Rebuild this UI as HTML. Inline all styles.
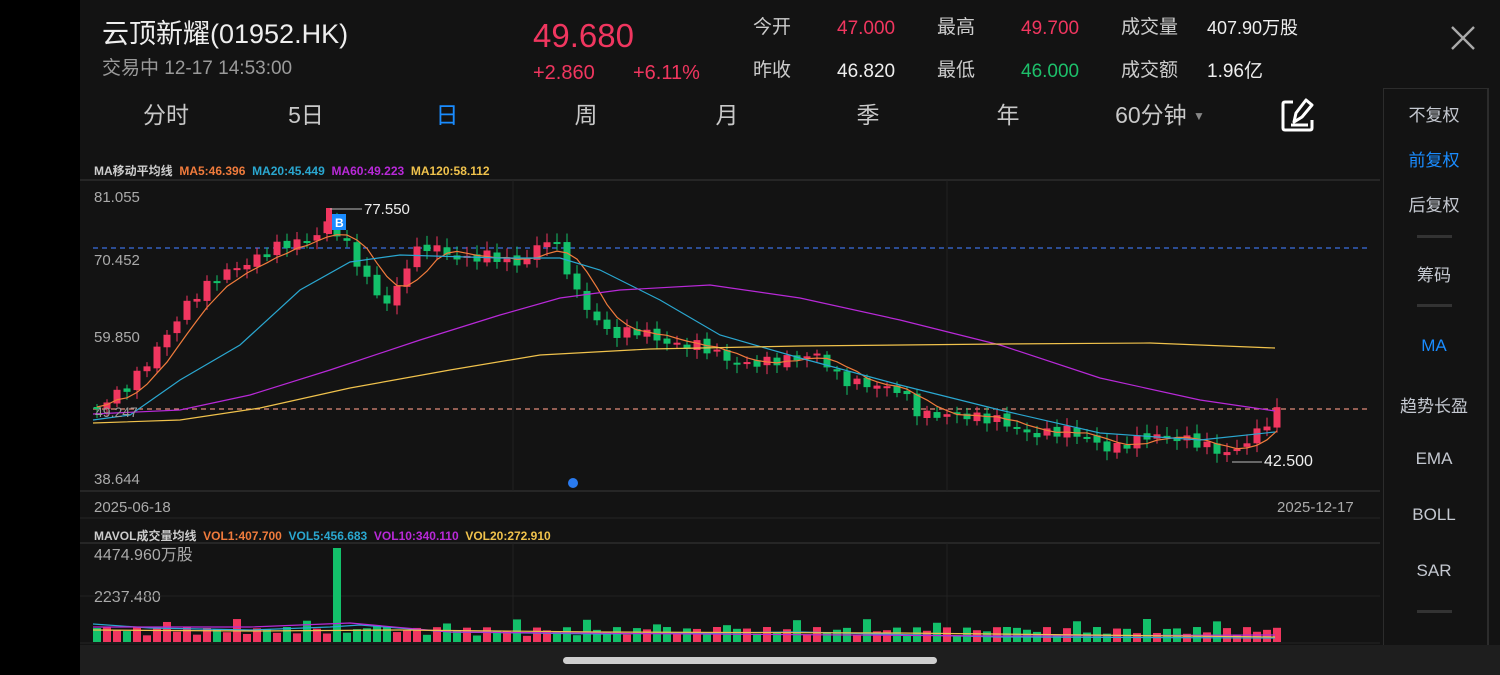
<!DOCTYPE html>
<html><head><meta charset="utf-8"><style>
body{margin:0;width:1500px;height:675px;background:#131313;overflow:hidden;position:relative;font-family:"Liberation Sans","Noto Sans CJK SC",sans-serif;color:#ddd}
.a{position:absolute;white-space:nowrap;line-height:1}
.r{color:#f0365f}.g{color:#1dbf6a}.w{color:#eee}.gr{color:#aaa}
.tab{position:absolute;top:96px;font-size:23px;color:#c8c8c8;transform:translateX(-50%)}
.rp{position:absolute;left:1434px;transform:translateX(-50%);font-size:17px;color:#c4c8d0;white-space:nowrap}
.bar{position:absolute;left:1417px;width:35px;height:3px;background:#333}
</style></head><body>
<div class="a" style="left:0;top:0;width:80px;height:675px;background:#000"></div>
<div class="a w" style="left:102px;top:21px;font-size:27px">云顶新耀(01952.HK)</div>
<div class="a gr" style="left:102px;top:59px;font-size:19px;color:#9a9a9a">交易中 12-17 14:53:00</div>
<div class="a r" style="left:533px;top:19px;font-size:33px">49.680</div>
<div class="a r" style="left:533px;top:63px;font-size:20px">+2.860</div>
<div class="a r" style="left:633px;top:63px;font-size:20px">+6.11%</div>
<div class="a" style="left:753px;top:18px;font-size:19px;color:#ccc">今开</div>
<div class="a r" style="left:837px;top:19px;font-size:19px">47.000</div>
<div class="a" style="left:937px;top:18px;font-size:19px;color:#ccc">最高</div>
<div class="a r" style="left:1021px;top:19px;font-size:19px">49.700</div>
<div class="a" style="left:1121px;top:18px;font-size:19px;color:#ccc">成交量</div>
<div class="a w" style="left:1207px;top:19px;font-size:18px">407.90万股</div>
<div class="a" style="left:753px;top:61px;font-size:19px;color:#ccc">昨收</div>
<div class="a w" style="left:837px;top:62px;font-size:19px">46.820</div>
<div class="a" style="left:937px;top:61px;font-size:19px;color:#ccc">最低</div>
<div class="a g" style="left:1021px;top:62px;font-size:19px">46.000</div>
<div class="a" style="left:1121px;top:61px;font-size:19px;color:#ccc">成交额</div>
<div class="a w" style="left:1207px;top:62px;font-size:19px">1.96亿</div>
<svg class="a" style="left:1450px;top:25px" width="26" height="26"><path d="M2 2L24 24M24 2L2 24" stroke="#aaa" stroke-width="2.4"/></svg>
<div class="tab" style="left:166px">分时</div>
<div class="tab" style="left:306px">5日</div>
<div class="tab" style="left:447px;color:#1a8cff">日</div>
<div class="tab" style="left:586px">周</div>
<div class="tab" style="left:727px">月</div>
<div class="tab" style="left:868px">季</div>
<div class="tab" style="left:1008px">年</div>
<div class="tab" style="left:1160px">60分钟 <span style="font-size:12px;color:#888;vertical-align:3px">▼</span></div>
<svg class="a" style="left:1280px;top:96px" width="38" height="38"><path d="M13 6H5Q3 6 3 8V32Q3 34 5 34H30Q32 34 32 32V24" fill="none" stroke="#fff" stroke-width="3"/><path d="M14 26L16 17L26 4L32 9L22 21Z" fill="none" stroke="#fff" stroke-width="3" stroke-linejoin="round"/><path d="M11 29H28" stroke="#fff" stroke-width="3"/></svg>
<div class="a" style="left:1383px;top:88px;width:103px;height:556px;border:1px solid #2c2c2c;border-right:2px solid #2c2c2c"></div>
<div class="rp" style="top:101px">不复权</div>
<div class="rp" style="top:146px;color:#1a8cff">前复权</div>
<div class="rp" style="top:191px">后复权</div>
<div class="bar" style="top:235px"></div>
<div class="rp" style="top:261px">筹码</div>
<div class="bar" style="top:304px"></div>
<div class="rp" style="top:336px;color:#1a8cff">MA</div>
<div class="rp" style="top:392px">趋势长盈</div>
<div class="rp" style="top:449px">EMA</div>
<div class="rp" style="top:505px">BOLL</div>
<div class="rp" style="top:561px">SAR</div>
<div class="bar" style="top:610px"></div>
<div class="a" style="left:94px;top:165px;font-size:12px;font-weight:bold"><span style="color:#ccc">MA移动平均线</span>&nbsp;&nbsp;<span style="color:#f07b3c">MA5:46.396</span>&nbsp;&nbsp;<span style="color:#2aa7d0">MA20:45.449</span>&nbsp;&nbsp;<span style="color:#b829d8">MA60:49.223</span>&nbsp;&nbsp;<span style="color:#f0c24c">MA120:58.112</span></div>
<div class="a" style="left:94px;top:530px;font-size:12px;font-weight:bold"><span style="color:#ccc">MAVOL成交量均线</span>&nbsp;&nbsp;<span style="color:#f07b3c">VOL1:407.700</span>&nbsp;&nbsp;<span style="color:#2aa7d0">VOL5:456.683</span>&nbsp;&nbsp;<span style="color:#b829d8">VOL10:340.110</span>&nbsp;&nbsp;<span style="color:#f0c24c">VOL20:272.910</span></div>
<div class="a" style="left:94px;top:190px;font-size:15px;color:#aaa">81.055</div>
<div class="a" style="left:94px;top:253px;font-size:15px;color:#aaa">70.452</div>
<div class="a" style="left:94px;top:330px;font-size:15px;color:#aaa">59.850</div>
<div class="a" style="left:94px;top:472px;font-size:15px;color:#aaa">38.644</div>
<div class="a" style="left:94px;top:500px;font-size:15px;color:#aaa">2025-06-18</div>
<div class="a" style="left:1277px;top:500px;font-size:15px;color:#aaa">2025-12-17</div>
<div class="a" style="left:94px;top:548px;font-size:16px;color:#aaa">4474.960万股</div>
<div class="a" style="left:94px;top:590px;font-size:16px;color:#aaa">2237.480</div>
<div class="a w" style="left:364px;top:202px;font-size:15px">77.550</div>
<div class="a w" style="left:1264px;top:454px;font-size:16px">42.500</div>
<svg id="ch" class="a" style="left:0;top:0" width="1500" height="675"></svg>
<div class="a" style="left:80px;top:645px;width:1420px;height:30px;background:#1e1e1e"></div>
<div class="a" style="left:563px;top:657px;width:374px;height:7px;border-radius:4px;background:#cfcfcf"></div>
<script>
var s=document.getElementById('ch'),h='';
function L(x1,y1,x2,y2,c,w,d){h+='<line x1="'+x1+'" y1="'+y1+'" x2="'+x2+'" y2="'+y2+'" stroke="'+c+'" stroke-width="'+(w||1)+'"'+(d?' stroke-dasharray="'+d+'"':'')+'/>';}
L(80,180,1380,180,'#262626',2);L(80,491,1380,491,'#262626',2);L(80,518,1380,518,'#262626',1);L(80,543,1380,543,'#262626',2);L(80,596,1380,596,'#222',1);L(80,643,1380,643,'#262626',1);
L(513,180,513,491,'#222');L(947,180,947,491,'#222');L(513,543,513,643,'#222');L(947,543,947,643,'#222');
L(93,248,1370,248,'#3a6fe0',1.2,'5,4');L(93,409,1370,409,'#e08a7a',1.2,'5,4');
var K=[[100,405],[130,385],[160,345],[190,300],[220,275],[250,262],[280,245],[310,240],[330,222],[350,250],[370,285],[385,305],[400,285],[410,255],[430,245],[460,260],[490,255],[520,265],[550,235],[565,265],[580,300],[610,335],[640,330],[670,345],[700,345],[740,365],[780,360],[820,355],[840,380],[870,385],[900,390],[920,415],[960,415],[1000,420],[1030,435],[1070,430],[1110,450],[1150,435],[1190,440],[1230,455],[1260,430],[1275,412]];
function P(x){for(var i=0;i<K.length-1;i++){if(x<=K[i+1][0]){var t=(x-K[i][0])/(K[i+1][0]-K[i][0]);return K[i][1]+t*(K[i+1][1]-K[i][1]);}}return K[K.length-1][1];}
var prev=P(97),ma=[];
for(var i=0;i<119;i++){var x=97+i*10.0,c=P(x)+Math.sin(i*2.7)*5,o=prev+Math.sin(i*1.3)*2;var up=c<o;var col=up?'#f0365f':'#13c06a';var t=Math.min(o,c),b=Math.max(o,c);if(b-t<2)b=t+2;var hi=t-3-Math.abs(Math.sin(i*3.1))*6,lo=b+3+Math.abs(Math.cos(i*2.3))*6;
L(x,hi,x,lo,col,1);h+='<rect x="'+(x-3.5)+'" y="'+t+'" width="7" height="'+(b-t)+'" fill="'+col+'"/>';prev=c;ma.push([x,c]);
var v=6+Math.abs(Math.sin(i*1.9))*9+(i%7==0?8:0);if(i==24)v=94;h+='<rect x="'+(x-4)+'" y="'+(642-v)+'" width="8" height="'+v+'" fill="'+col+'"/>';}
function poly(pts,c){h+='<polyline fill="none" stroke="'+c+'" stroke-width="1.2" points="'+pts.map(function(p){return p.join(',')}).join(' ')+'"/>';}
var m5=[];for(var i=0;i<ma.length;i++){var sm=0,n=0;for(var j=Math.max(0,i-4);j<=i;j++){sm+=ma[j][1];n++;}m5.push([ma[i][0],sm/n]);}
poly(m5,'#f07b3c');
poly([[93,420],[130,415],[180,380],[240,345],[300,290],[350,262],[400,255],[500,258],[560,258],[600,270],[660,300],[720,335],[800,358],[900,385],[1000,410],[1100,433],[1200,440],[1275,432]],'#2aa7d0');
poly([[93,414],[180,410],[250,395],[330,370],[420,340],[500,315],[560,298],[620,290],[710,285],[800,298],[900,320],[1000,345],[1100,378],[1200,400],[1275,411]],'#b829d8');
poly([[93,423],[180,420],[260,408],[350,388],[450,370],[540,355],[650,349],[800,346],[1000,344],[1150,343],[1275,348]],'#f0c24c');
poly([[93,624],[150,628],[250,630],[330,627],[360,625],[450,632],[600,634],[800,632],[1000,637],[1275,638]],'#2aa7d0');
poly([[93,627],[250,627],[350,623],[450,632],[700,634],[1000,636],[1275,635]],'#b829d8');
poly([[93,630],[250,631],[400,630],[600,632],[900,633],[1275,637]],'#f0c24c');
h+='<rect x="326" y="208" width="6" height="26" fill="#f0365f"/><rect x="332" y="214" width="14" height="16" fill="#1a8cff"/><text x="335" y="227" font-size="12" fill="#fff" font-family="Liberation Sans" font-weight="bold">B</text>';
L(330,209,362,209,'#bbb');L(1232,462,1262,462,'#bbb');
h+='<circle cx="573" cy="483" r="5" fill="#2a7bf0"/>';
h+='<text x="95" y="417" font-size="14" fill="#999" font-family="Liberation Sans">49.247</text>';
s.innerHTML=h;
</script>
</body></html>
